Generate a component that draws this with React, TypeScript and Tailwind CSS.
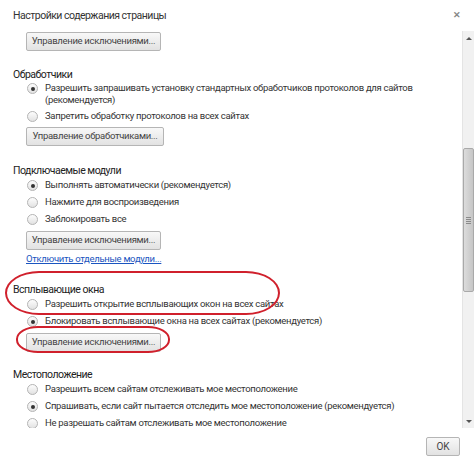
import React from 'react';

// Radio circle drawn in CSS: light gradient ring, dark dot when checked
function Radio({ checked = false }: { checked?: boolean }) {
  return (
    <span className="flex h-[11px] w-[11px] shrink-0 items-center justify-center rounded-full border border-[#b4b4b4] bg-gradient-to-b from-[#fdfdfd] to-[#e2e2e2]">
      {checked && <span className="h-[4px] w-[4px] rounded-full bg-[#333]" />}
    </span>
  );
}

function RadioRow({ checked, children }: { checked?: boolean; children: React.ReactNode }) {
  return (
    <div className="flex h-[17px] items-center gap-[7px] pl-[27px]">
      <Radio checked={checked} />
      <span className="whitespace-nowrap">{children}</span>
    </div>
  );
}

function Btn({ width, children }: { width: string; children: React.ReactNode }) {
  return (
    <div
      className={`ml-[26px] flex h-[19px] items-center justify-center whitespace-nowrap rounded-[2px] border border-[#b5b5b5] bg-gradient-to-b from-[#f8f8f8] to-[#e2e2e2] text-[#444] ${width}`}
    >
      {children}
    </div>
  );
}

function Heading({ children, className = '' }: { children: React.ReactNode; className?: string }) {
  return (
    <div className={`flex h-[13px] items-center pl-[13px] text-[10.5px] tracking-[-0.5px] text-[#222] ${className}`}>
      {children}
    </div>
  );
}

function Scrollbar() {
  return (
    <div className="flex w-[12px] shrink-0 flex-col border-l border-[#e4e4e4] bg-[#f1f1f1]">
      <div className="flex h-[14px] items-center justify-center">
        <span className="h-0 w-0 border-x-[3px] border-b-[3px] border-x-transparent border-b-[#555]" />
      </div>
      <div className="h-[103px]" />
      <div className="flex h-[144px] items-center justify-center rounded-[2px] border border-[#a9a9a9] bg-gradient-to-r from-[#dcdcdc] to-[#c6c6c6]">
        <div className="flex flex-col gap-[1px]">
          <span className="h-px w-[5px] bg-[#8a8a8a]" />
          <span className="h-px w-[5px] bg-[#8a8a8a]" />
          <span className="h-px w-[5px] bg-[#8a8a8a]" />
          <span className="h-px w-[5px] bg-[#8a8a8a]" />
        </div>
      </div>
      <div className="flex-1" />
      <div className="flex h-[14px] items-center justify-center">
        <span className="h-0 w-0 border-x-[3px] border-t-[3px] border-x-transparent border-t-[#555]" />
      </div>
    </div>
  );
}

export default function App() {
  return (
    <div
      className="relative h-[465px] w-[474px] overflow-hidden bg-white text-[9.5px] tracking-[-0.3px] text-[#333]"
      style={{ fontFamily: 'Roboto, "Noto Sans", sans-serif' }}
    >
      {/* Title bar */}
      <div className="flex h-[31px] items-center justify-between pl-[13px] pr-[13px]">
        <span className="text-[10.5px] tracking-[-0.5px] text-[#333]">Настройки содержания страницы</span>
        <span className="text-[9px] font-bold leading-none text-[#888]">✕</span>
      </div>

      {/* Scrolling settings area */}
      <div className="flex h-[397px]">
        <div className="flex-1 overflow-hidden">
          <div className="mt-[1px]">
            <Btn width="w-[135px]">Управление исключениями...</Btn>
          </div>

          {/* Handlers */}
          <Heading className="mt-[17px]">Обработчики</Heading>
          <div className="flex h-[27px] items-start gap-[7px] pl-[27px] pt-[1px]">
            <span className="mt-[1px]">
              <Radio checked />
            </span>
            <span className="whitespace-nowrap leading-[12px]">
              Разрешить запрашивать установку стандартных обработчиков протоколов для сайтов
              <br />
              (рекомендуется)
            </span>
          </div>
          <RadioRow>Запретить обработку протоколов на всех сайтах</RadioRow>
          <div className="mt-[2px]">
            <Btn width="w-[138px]">Управление обработчиками...</Btn>
          </div>

          {/* Plugins */}
          <Heading className="mt-[18px]">Подключаемые модули</Heading>
          <RadioRow checked>Выполнять автоматически (рекомендуется)</RadioRow>
          <RadioRow>Нажмите для воспроизведения</RadioRow>
          <RadioRow>Заблокировать все</RadioRow>
          <div className="mt-[3px]">
            <Btn width="w-[135px]">Управление исключениями...</Btn>
          </div>
          <div className="mt-[2px] flex h-[14px] items-center pl-[26px]">
            <span className="text-[#1a55c0] underline">Отключить отдельные модули...</span>
          </div>

          {/* Pop-ups */}
          <Heading className="mt-[17px]">Всплывающие окна</Heading>
          <RadioRow>Разрешить открытие всплывающих окон на всех сайтах</RadioRow>
          <RadioRow checked>Блокировать всплывающие окна на всех сайтах (рекомендуется)</RadioRow>
          <div className="mt-[3px]">
            <Btn width="w-[135px]">Управление исключениями...</Btn>
          </div>

          {/* Location */}
          <Heading className="mt-[16px]">Местоположение</Heading>
          <RadioRow>Разрешить всем сайтам отслеживать мое местоположение</RadioRow>
          <RadioRow checked>Спрашивать, если сайт пытается отследить мое местоположение (рекомендуется)</RadioRow>
          <RadioRow>Не разрешать сайтам отслеживать мое местоположение</RadioRow>
        </div>
        <Scrollbar />
      </div>

      {/* Footer */}
      <div className="flex justify-end pr-[14px] pt-[9px]">
        <div className="flex h-[19px] w-[34px] items-center justify-center rounded-[2px] border border-[#b5b5b5] bg-gradient-to-b from-[#f8f8f8] to-[#e2e2e2] text-[10px] tracking-normal text-[#444]">
          OK
        </div>
      </div>

      {/* Red annotation outlines */}
      <div className="absolute left-[5px] top-[271px] h-[44px] w-[275px] rounded-[34px/22px] border-2 border-[#d0202c]" />
      <div className="absolute left-[16px] top-[326px] h-[27px] w-[154px] rounded-[22px/13px] border-2 border-[#d0202c]" />
    </div>
  );
}
